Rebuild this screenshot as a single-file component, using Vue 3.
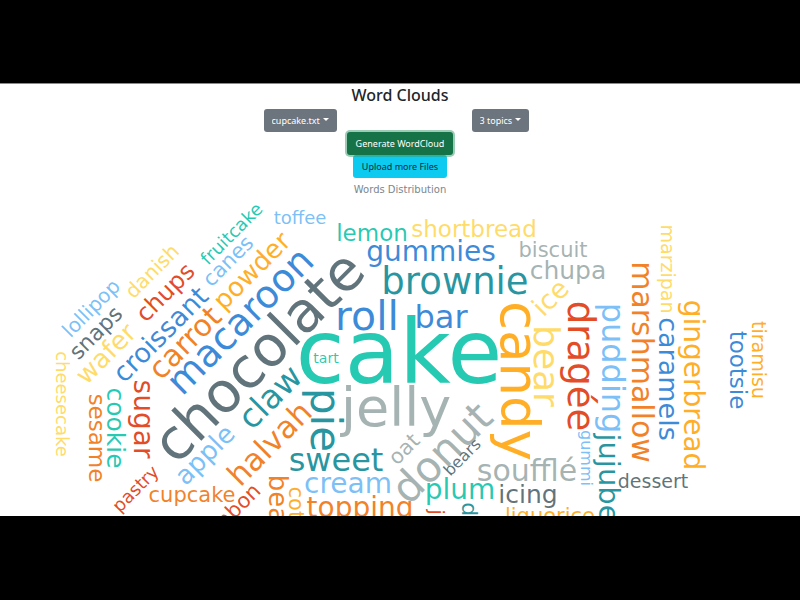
<script setup>
import { ref } from 'vue'

const file = ref('cupcake.txt')
const topics = ref('3 topics')

const palette = {
  sky: '#64b5f6',
  blue: '#1976d2',
  orange: '#ef6c00',
  yellow: '#ffd54f',
  slate: '#455a64',
  gray: '#96a6a6',
  red: '#dd2c00',
  teal: '#00838f',
  green: '#00bfa5',
  amber: '#ffa000',
}

// Each entry: text, middle of the baseline (x, y), font size, rotation, colour
const words = [
  ['cake', 399, 383, 89, 0, 'green'],
  ['chocolate', 272, 370, 56, -45, 'slate'],
  ['jelly', 396, 426, 54, 0, 'gray'],
  ['candy', 501, 381, 53, 90, 'amber'],
  ['donut', 452, 463, 42, -45, 'gray'],
  ['pie', 311, 420, 42, 90, 'teal'],
  ['roll', 367, 330, 41, 0, 'blue'],
  ['macaroon', 249, 330, 38, -45, 'blue'],
  ['brownie', 455, 294, 37, 0, 'teal'],
  ['dragée', 568, 366, 37, 90, 'red'],
  ['bear', 534, 366, 36, 90, 'yellow'],
  ['claw', 278, 405, 33, -45, 'teal'],
  ['bar', 441, 328, 32, 0, 'blue'],
  ['sweet', 336, 471, 32, 0, 'teal'],
  ['halvah', 277, 451, 31, -45, 'orange'],
  ['pudding', 602, 368, 32, 90, 'sky'],
  ['carrot', 192, 350, 30, -45, 'orange'],
  ['marshmallow', 632, 362, 30, 90, 'orange'],
  ['soufflé', 527, 481, 30, 0, 'gray'],
  ['ice', 557, 304, 27, -45, 'yellow'],
  ['jujube', 599, 478, 29, 90, 'teal'],
  ['gummies', 431, 261, 28, 0, 'blue'],
  ['powder', 258, 277, 26, -45, 'amber'],
  ['wafer', 112, 360, 26, -45, 'yellow'],
  ['apple', 211, 461, 26, -45, 'sky'],
  ['sugar', 134, 419, 28, 90, 'red'],
  ['cream', 348, 493, 28, 0, 'sky'],
  ['plum', 460, 499, 28, 0, 'green'],
  ['topping', 360, 517, 28, 0, 'orange'],
  ['gingerbread', 684, 385, 28, 90, 'amber'],
  ['croissant', 167, 341, 27, -45, 'blue'],
  ['caramels', 659, 379, 27, 90, 'blue'],
  ['chups', 171, 298, 24, -45, 'red'],
  ['beans', 269, 514, 26, 90, 'orange'],
  ['chupa', 568, 279, 25, 0, 'gray'],
  ['icing', 528, 503, 25, 0, 'slate'],
  ['cookie', 107, 428, 25, 90, 'green'],
  ['lemon', 372, 241, 23, 0, 'green'],
  ['shortbread', 474, 237, 23, 0, 'yellow'],
  ['snaps', 101, 338, 22, -45, 'slate'],
  ['sesame', 89, 438, 23, 90, 'orange'],
  ['tootsie', 730, 370, 23, 90, 'blue'],
  ['canes', 233, 266, 21, -45, 'sky'],
  ['oat', 409, 454, 21, -45, 'gray'],
  ['drops', 462, 533, 22, 90, 'teal'],
  ['biscuit', 553, 257, 21, 0, 'gray'],
  ['cupcake', 192, 502, 21, 0, 'orange'],
  ['liquorice', 550, 523, 21, 0, 'amber'],
  ['lollipop', 96, 313, 20, -45, 'sky'],
  ['danish', 157, 276, 20, -45, 'yellow'],
  ['bonbon', 234, 520, 21, -45, 'red'],
  ['cotton', 289, 520, 21, 90, 'amber'],
  ['jam', 430, 528, 20, 90, 'red'],
  ['dessert', 653, 488, 19, 0, 'slate'],
  ['fruitcake', 236, 238, 18, -45, 'green'],
  ['pastry', 140, 493, 18, -45, 'red'],
  ['marzipan', 661, 269, 19, 90, 'yellow'],
  ['tiramisu', 752, 360, 19, 90, 'amber'],
  ['toffee', 300, 224, 18, 0, 'sky'],
  ['cheesecake', 56, 404, 18, 90, 'yellow'],
  ['gummi', 581, 458, 16, 90, 'sky'],
  ['bears', 466, 461, 16, -45, 'slate'],
  ['tart', 326, 363, 14, 0, 'green'],
].map(([text, x, y, size, angle, color]) => ({ text, x, y, size, angle, color }))
</script>

<template>
  <div class="stage">
    <main class="page">
      <h1 class="title">Word Clouds</h1>
      <div class="filters">
        <span class="dropdown">
          <select v-model="file" class="btn secondary" aria-label="File">
            <option>cupcake.txt</option>
          </select>
          <span class="caret"></span>
        </span>
        <span class="dropdown">
          <select v-model="topics" class="btn secondary" aria-label="Topics">
            <option>3 topics</option>
          </select>
          <span class="caret"></span>
        </span>
      </div>
      <div class="actions">
        <button type="button" class="btn success">Generate WordCloud</button>
        <button type="button" class="btn info">Upload more Files</button>
      </div>
      <h2 class="chart-title">Words Distribution</h2>
      <svg class="cloud" viewBox="0 200 800 316" role="img" aria-label="Words Distribution">
        <text
          v-for="w in words"
          :key="w.text"
          :transform="`translate(${w.x} ${w.y}) rotate(${w.angle})`"
          :font-size="w.size"
          :fill="palette[w.color]"
          text-anchor="middle"
        >{{ w.text }}</text>
      </svg>
    </main>
  </div>
</template>

<style>
body {
  background: #000;
}
</style>

<style scoped>
.stage {
  box-sizing: border-box;
  min-height: 100vh;
  padding: 83px 0 84px;
  background: #000;
}

.page {
  background: #fff;
  border-top: 1px solid #8a8a8a;
  color: #212529;
  font-family: "Noto Sans", "Open Sans", sans-serif;
  text-align: center;
}

.title {
  margin: 0;
  padding-bottom: 3px;
  font-size: 16px;
  line-height: 22px;
  font-weight: 500;
}

.filters {
  display: grid;
  grid-template-columns: 1fr 1fr;
  width: 50%;
  margin: 0 auto;
  justify-items: center;
}

.dropdown {
  position: relative;
  display: flex;
}

.btn {
  height: 23px;
  padding: 0 9px;
  border: 0;
  border-radius: 3px;
  font-family: inherit;
  font-size: 9px;
  line-height: 23px;
}

.secondary {
  appearance: none;
  padding: 0 16px 0 8px;
  background: #6c757d;
  color: #fff;
}

.caret {
  position: absolute;
  top: 9px;
  right: 8px;
  border: 3px solid transparent;
  border-top-color: #fff;
  border-bottom: 0;
  pointer-events: none;
}

.actions {
  display: flex;
  flex-direction: column;
  align-items: center;
}

.success {
  position: relative;
  background: #157347;
  color: #fff;
  box-shadow: 0 0 0 2px rgba(60, 153, 110, 0.5);
}

.info {
  background: #0dcaf0;
  color: #052c34;
}

.chart-title {
  margin: 0;
  padding: 5px 0 3px;
  color: #7c868e;
  font-family: "DejaVu Sans", sans-serif;
  font-size: 10px;
  line-height: 14px;
  font-weight: 400;
}

.cloud {
  display: block;
  width: 100%;
  height: auto;
  overflow: hidden;
  font-family: "DejaVu Sans", sans-serif;
  fill-opacity: 0.85;
}
</style>
